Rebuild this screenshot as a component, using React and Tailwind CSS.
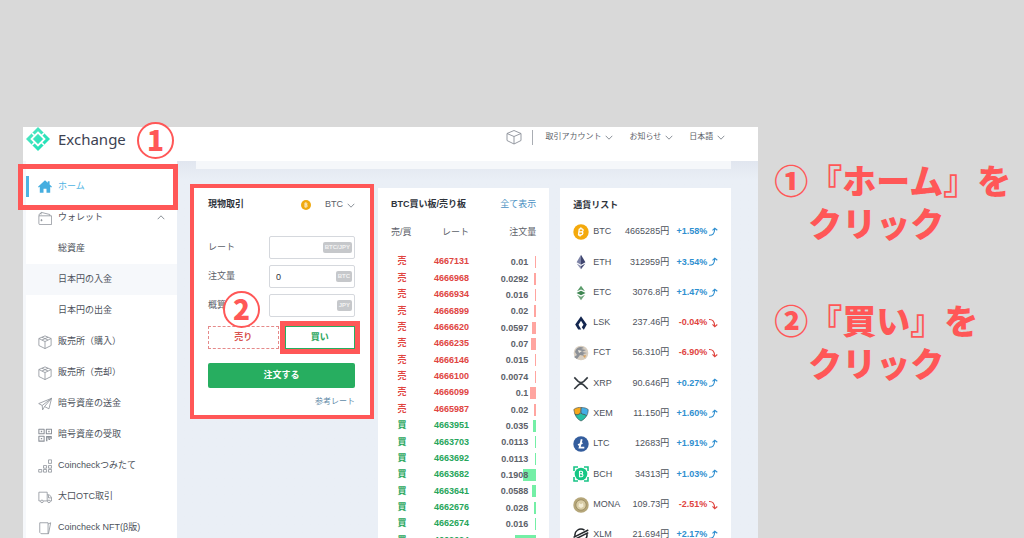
import React from 'react';

const sidebarItems = [
  { label: 'ウォレット', icon: 'wallet', open: true },
  { label: '総資産' },
  { label: '日本円の入金', shaded: true },
  { label: '日本円の出金' },
  { label: '販売所（購入）', icon: 'cube' },
  { label: '販売所（売却）', icon: 'cube' },
  { label: '暗号資産の送金', icon: 'plane' },
  { label: '暗号資産の受取', icon: 'qr' },
  { label: 'Coincheckつみたて', icon: 'stack' },
  { label: '大口OTC取引', icon: 'truck' },
  { label: 'Coincheck NFT(β版)', icon: 'cards' },
];

const orders = [
  ['売', '4667131', '0.01', 1],
  ['売', '4666968', '0.0292', 2],
  ['売', '4666934', '0.016', 1],
  ['売', '4666899', '0.02', 2],
  ['売', '4666620', '0.0597', 4],
  ['売', '4666235', '0.07', 5],
  ['売', '4666146', '0.015', 1],
  ['売', '4666100', '0.0074', 1],
  ['売', '4666099', '0.1', 6],
  ['売', '4665987', '0.02', 2],
  ['買', '4663951', '0.035', 3],
  ['買', '4663703', '0.0113', 1],
  ['買', '4663692', '0.0113', 1],
  ['買', '4663682', '0.1908', 13],
  ['買', '4663641', '0.0588', 4],
  ['買', '4662676', '0.028', 2],
  ['買', '4662674', '0.016', 1],
  ['買', '4662624', '0.3187', 21],
];

const coins = [
  ['BTC', '4665285', '+1.58%'],
  ['ETH', '312959', '+3.54%'],
  ['ETC', '3076.8', '+1.47%'],
  ['LSK', '237.46', '-0.04%'],
  ['FCT', '56.310', '-6.90%'],
  ['XRP', '90.646', '+0.27%'],
  ['XEM', '11.150', '+1.60%'],
  ['LTC', '12683', '+1.91%'],
  ['BCH', '34313', '+1.03%'],
  ['MONA', '109.73', '-2.51%'],
  ['XLM', '21.694', '+2.17%'],
];

function Chevron({ up }) {
  return (
    <svg viewBox="0 0 8 5" className="h-[5px] w-2 shrink-0" fill="none" stroke="#7d838c" strokeWidth="0.9" aria-hidden="true">
      <path d={up ? 'M0.7 4.2 4 0.8l3.3 3.4' : 'M0.7 0.8 4 4.2l3.3-3.4'} />
    </svg>
  );
}

function MenuIcon({ name }) {
  const shapes = {
    wallet: (
      <>
        <path d="M1 5.500h14.500v10H2.200A1.200 1.200 0 0 1 1 14.300z" />
        <path d="M1.200 5.500V3.800L3.500 2.500M3.500 4V1.500l10 2.500v1.500" />
        <circle cx="4" cy="10.500" r=".7" fill="#8b9098" />
      </>
    ),
    cube: (
      <>
        <path d="M8 1 15 4v8l-7 3.500L1 12V4z" />
        <path d="m1 4 7 3.500L15 4M8 7.500v8M4.500 2.500l7 3.300M11.500 2.500l-7 3.300" />
      </>
    ),
    plane: <path d="M15.500 1.500.8 7.500l4 2.200 10.700-8.200-3 12-5-2.600-2.200 3.800-.5-5M7.500 10.900l8-9.400" />,
    qr: (
      <>
        <path d="M1 1.500h6v5H1zM9.500 1.500h6v5h-6zM1 9.500h6v5.500H1z" strokeWidth="1.200" />
        <path d="M3.200 4h1.600M11.700 4h1.600M3.200 12.200h1.600M9.500 10h6M10 9.500v5.500M12.500 9.500v3M15 9.500v3M12 13h2" strokeWidth="1.500" />
      </>
    ),
    stack: (
      <path d="M.8 12h3.500v3H.8zM6.300 12h3.500v3H6.300zM12 12h3.500v3H12zM6.300 7.500h3.500v3H6.300zM12 7.500h3.500v3H12zM12 1h3.500v4H12z" />
    ),
    truck: (
      <>
        <path d="M3 12.500H1V2.500h9.500v10H6M10.500 5.500H13l2.500 3v4H14M10.500 12.500h.5M12 6v3h3.500" />
        <circle cx="4.500" cy="13" r="1.500" />
        <circle cx="12.500" cy="13" r="1.500" />
      </>
    ),
    cards: <path d="M2 2h9.500v12.500H3.500L2 13zM11.500 3.500 14.500 2l-2.500 12.500h-.5" />,
  };
  return (
    <svg viewBox="0 0 16 16" className="size-[14px] shrink-0" fill="none" stroke="#8b9098" strokeWidth="0.9" strokeLinejoin="round" aria-hidden="true">
      {shapes[name]}
    </svg>
  );
}

function CoinIcon({ name }) {
  const art = {
    BTC: (
      <>
        <circle cx="8" cy="8" r="7.700" fill="#f4a90b" />
        <path d="M6.300 4.800 5.500 11.200M6.300 4.900h2.400c2 0 1.900 2.800-.3 2.900H6.200M8.400 7.800c2.300.1 1.700 3.200-.6 3.200H5M8 3.400l-.2 1.300M7.200 11.200 7 12.500" fill="none" stroke="#fff" strokeWidth="1.300" />
      </>
    ),
    ETH: (
      <>
        <path d="M8 .8 3.600 8.300 8 10.800z" fill="#7d83a6" />
        <path d="M8 .8v10l4.400-2.500z" fill="#3f456f" />
        <path d="M3.600 9.500 8 15.200V12z" fill="#8b90b0" />
        <path d="M12.400 9.500 8 15.200V12z" fill="#4b5179" />
      </>
    ),
    ETC: (
      <>
        <path d="M8 .8 4 6.200 8 4.600l4 1.600z" fill="#5b9c6b" />
        <path d="M3.500 8 8 5.800 12.500 8 8 10.300z" fill="#3f8652" />
        <path d="M4 9.700 8 15.200l4-5.500-4 2z" fill="#6fa67c" />
      </>
    ),
    LSK: <path d="M8 1.200 2.200 9.600l3 4.900h3L5.500 9.800 8 5.800l2.500 4-1.700 2.400 1.600 2.300h.6l2.800-4.900z" fill="#13264f" />,
    FCT: (
      <>
        <circle cx="8" cy="8" r="7.300" fill="#d8cec0" />
        <path d="M2 7c1-5 6-6 9-4l-3 1 5 1-4 2 5 1-4 1 2 2-5-1-3 4-3-2 3-2z" fill="#8d9197" />
        <path d="M5 5l4 1-3 2z" fill="#eee9df" />
        <path d="M10 11l3-1-1 3z" fill="#dba25b" />
      </>
    ),
    XRP: <path d="M1.300 2.400 5.200 6.300q2.800 2.500 5.600 0l3.900-3.900M1.300 14l3.900-3.900q2.800-2.500 5.600 0l3.900 3.900" fill="none" stroke="#343a40" strokeWidth="1.600" />,
    XEM: (
      <>
        <path d="M.8 3.500C3 1.500 6 1.300 8.500 1.500 6.500 3.500 9 7 5.500 8.500c-1.500.8-3 .2-3.700-.5z" fill="#f6a81c" stroke="#37484a" strokeWidth=".6" />
        <path d="M8.500 1.500c3 0 5 .7 6.700 2 0 3-.7 5-1.700 6.500-1-2.500-4-.5-5.500-3z" fill="#45aee5" stroke="#37484a" strokeWidth=".6" />
        <path d="M1.900 8c1 1 2.500 1 4 .2C7.500 7.500 8 7 8 7c1.500 2.500 4.500.5 5.500 3-1.500 2.500-3.500 4-5.500 5-3-1.300-5-4-6.100-7z" fill="#28bfa5" stroke="#37484a" strokeWidth=".6" />
      </>
    ),
    LTC: (
      <>
        <circle cx="8" cy="8" r="7.700" fill="#345d9d" />
        <path d="M8.700 3.300 6.600 11.700h4.700M5 9l4.500-2" fill="none" stroke="#fff" strokeWidth="1.800" />
      </>
    ),
    BCH: (
      <>
        <path d="M1 5V1h4M11 1h4v4M15 11v4h-4M5 15H1v-4" fill="none" stroke="#18c486" strokeWidth="1.600" />
        <circle cx="8" cy="8" r="6.300" fill="#16c784" />
        <path d="M6.500 5v6M6.500 5.200h1.800c1.800 0 1.800 2.600 0 2.600H6.500M8.300 7.900c2.300 0 2.200 2.900 0 2.900H6" fill="none" stroke="#fff" strokeWidth="1.100" />
      </>
    ),
    MONA: (
      <>
        <circle cx="8" cy="8" r="7.700" fill="#b5a679" />
        <circle cx="8" cy="8" r="5.200" fill="#d8cca6" stroke="#8f8158" strokeWidth=".7" />
        <path d="M5.500 9.500 6 6l1.500 1h1L10 6l.5 3.500L8 11z" fill="#f3edd6" />
      </>
    ),
    XLM: (
      <>
        <path d="M2.300 10A6 6 0 0 1 11.500 3.200M13.800 6.500A6 6 0 0 1 4.500 12.800" fill="none" stroke="#23272b" strokeWidth="1.500" />
        <path d="M.5 10.300 15.300 3M.5 13 15.300 5.600" stroke="#23272b" strokeWidth="1.500" />
      </>
    ),
  };
  return (
    <svg viewBox="0 0 16 16" className="size-4" aria-hidden="true">
      {art[name]}
    </svg>
  );
}

function Trend({ up }) {
  return (
    <svg viewBox="0 0 10 10" className="size-2.5 shrink-0" fill="none" stroke="currentColor" strokeWidth="1.1" aria-hidden="true">
      {up ? (
        <path d="M1 8.300C4.500 8.500 6.500 7 6.700 1.800M4.500 3.400 6.800 1.200l2.500 2" />
      ) : (
        <path d="M1 1.500C4.500 1.300 6.500 3 6.700 8.200M4.500 6.300 6.800 8.700l2.500-2.200" />
      )}
    </svg>
  );
}

function Header() {
  return (
    <header className="relative z-10 flex h-[34px] shrink-0 items-start justify-between bg-white pl-[3px] pr-[33px]">
      <div className="flex h-6 items-center gap-2">
        <svg viewBox="0 0 24 24" className="size-6" aria-hidden="true">
          <defs>
            <linearGradient id="brand" x1="0" y1="0" x2="1" y2="1">
              <stop offset="0" stopColor="#5be7c4" />
              <stop offset="1" stopColor="#12e0b4" />
            </linearGradient>
          </defs>
          <path d="M12 0 24 12 12 24 0 12z" fill="url(#brand)" />
          <path d="M12 5.500 18.500 12 12 18.500 5.500 12z" fill="none" stroke="#fff" strokeWidth="1.800" />
          <path d="M6 6 9 9M18 6l-3 3M6 18l3-3M18 18l-3-3" stroke="#fff" strokeWidth="1.600" />
        </svg>
        <span className="font-['Noto_Sans'] text-[15px] leading-6 text-[#3d4252]">Exchange</span>
      </div>
      <nav className="flex h-5 items-center text-[8px] text-[#5c6169]">
        <svg viewBox="0 0 16 16" className="size-4" fill="none" stroke="#8b9098" strokeWidth="0.9" strokeLinejoin="round" aria-hidden="true">
          <path d="M8 1.500 15 4.500v7l-7 3.500-7-3.500v-7zM1 4.500 8 7.500l7-3M8 7.500V15" />
        </svg>
        <span className="ml-2.5 mr-3 h-[15px] w-px bg-[#a9adb3]" />
        <button type="button" className="mr-4 flex items-center gap-1">取引アカウント <Chevron /></button>
        <button type="button" className="mr-4 flex items-center gap-1">お知らせ <Chevron /></button>
        <button type="button" className="flex items-center gap-1">日本語 <Chevron /></button>
      </nav>
    </header>
  );
}

function Sidebar() {
  return (
    <nav className="w-[154px] shrink-0 border-l-[3px] border-[#f6f8fb] bg-white pt-[10px] text-[9px] text-[#4d525b]">
      <a href="#home" className="relative flex h-[31px] items-center text-[#4db3e3]">
        <span className="h-[21px] w-[3px] bg-[#4db3e3]" />
        <svg viewBox="0 0 14 13" className="ml-[9px] mr-1.5 h-[13px] w-[14px]" fill="#45aee0" aria-hidden="true">
          <path d="M7 .3 9.800 2.800V1.200h1.800v3.200L14 6.700l-.8.9-1-.8V12.800H8.500V8.800h-3v4H1.800V6.800l-1 .8L0 6.700z" />
        </svg>
        ホーム
        <span className="pointer-events-none absolute -bottom-2 -left-2 -right-px -top-[7px] border-[5px] border-[#ff5757]" />
      </a>
      {sidebarItems.map((item) => (
        <a
          key={item.label}
          href="#menu"
          className={`flex h-[31px] items-center pl-3 pr-3 ${item.shaded ? 'bg-[#f6f8fb]' : ''}`}
        >
          <span className="mr-1.5 flex w-[14px]">{item.icon && <MenuIcon name={item.icon} />}</span>
          <span className="grow whitespace-nowrap">{item.label}</span>
          {item.open && <Chevron up />}
        </a>
      ))}
    </nav>
  );
}

function Field({ id, label, unit, value }) {
  return (
    <div className="flex items-center justify-between">
      <label htmlFor={id} className="text-[9px] text-[#5c6169]">{label}</label>
      <div className="relative w-[86px]">
        <input
          id={id}
          defaultValue={value}
          className="block h-[23px] w-full rounded-[2px] border border-[#d5d8dd] bg-white pl-1.5 text-[9px] text-[#2f343c] outline-none"
        />
        <span className="absolute right-[3px] top-[6px] rounded-[2px] bg-[#c6c8cb] px-[2px] text-[6px] font-bold leading-[11px] text-[#f2f2f2]">
          {unit}
        </span>
      </div>
    </div>
  );
}

function OrderForm() {
  return (
    <form className="-ml-1.5 -mr-[7px] -mt-1 self-start border-4 border-[#ff5757] bg-white pb-[7px] pl-[14px] pr-[15px] pt-[11px]">
      <div className="flex h-3 items-center justify-between">
        <h2 className="text-[9px] font-bold text-[#2f343c]">現物取引</h2>
        <button type="button" className="flex items-center text-[9px] text-[#5c6169]">
          <svg viewBox="0 0 10 10" className="mr-[14px] size-2.5" aria-hidden="true">
            <circle cx="5" cy="5" r="5" fill="#f0aa10" />
            <path d="M4 2.800v4.500M4 3h1.200c1.200 0 1.200 1.800 0 1.900H4M5.200 5c1.500 0 1.500 2 0 2H4" fill="none" stroke="#fff" strokeWidth=".8" />
          </svg>
          <span className="mr-1">BTC</span>
          <Chevron />
        </button>
      </div>
      <div className="relative mt-[25px] flex flex-col gap-[6px]">
        <Field id="rate" label="レート" unit="BTC/JPY" />
        <Field id="amount" label="注文量" unit="BTC" value="0" />
        <Field id="estimate" label="概算" unit="JPY" />
        <Badge className="absolute left-[15px] top-[55px]">2</Badge>
      </div>
      <div className="mt-[9px] flex gap-[6px] text-[9px] font-bold">
        <button type="button" className="h-[23px] flex-1 border border-dashed border-[#e58a8a] text-[#d9534f]">売り</button>
        <button type="button" className="relative h-[23px] flex-1 border border-[#27ae60] text-[#27a55a]">
          買い
          <span className="pointer-events-none absolute -inset-[6px] border-[5px] border-[#ff5757]" />
        </button>
      </div>
      <button type="submit" className="mt-[14px] block h-[25px] w-full rounded-[2px] bg-[#27ae60] text-[9px] font-bold text-white">
        注文する
      </button>
      <div className="mt-2 flex justify-end">
        <a href="#rate-reference" className="text-[8px] leading-3 text-[#5f8ba8]">参考レート</a>
      </div>
    </form>
  );
}

function OrderBook() {
  return (
    <section className="bg-white px-[13px] pt-[11px]">
      <div className="flex h-3 items-center justify-between text-[9px]">
        <h2 className="whitespace-nowrap font-bold text-[#2f343c]">BTC買い板/売り板</h2>
        <a href="#all" className="text-[#4a90c2]">全て表示</a>
      </div>
      <table className="mt-[11px] h-[327px] w-full table-fixed text-[9px]">
        <thead>
          <tr className="h-8 text-[#5c6169]">
            <th className="w-[22px] whitespace-nowrap p-0 pb-[10px] text-left font-normal">売/買</th>
            <th className="w-14 p-0 pb-[10px] text-right font-normal">レート</th>
            <th className="p-0 pb-[10px] text-right font-normal">注文量</th>
          </tr>
        </thead>
        <tbody className="font-bold">
          {orders.map(([side, rate, amount, depth]) => (
            <tr key={rate} className={side === '売' ? 'text-[#e0453f]' : 'text-[#26a65b]'}>
              <td className="p-0 text-center">{side}</td>
              <td className="p-0 text-right">{rate}</td>
              <td className="p-0">
                <div className="relative flex justify-end pr-2">
                  <span
                    className={`absolute inset-y-0 right-0 ${side === '売' ? 'bg-[#ffa5a0]' : 'bg-[#74efa6]'}`}
                    style={{ width: depth }}
                  />
                  <span className="relative leading-[12px] text-[#5c6169]">{amount}</span>
                </div>
              </td>
            </tr>
          ))}
        </tbody>
      </table>
    </section>
  );
}

function CoinList() {
  return (
    <section className="bg-white px-[13px] pt-[11px]">
      <h2 className="h-3 text-[9px] font-bold leading-3 text-[#2f343c]">通貨リスト</h2>
      <table className="mt-[6px] h-[333px] w-full table-fixed whitespace-nowrap text-[9px] text-[#4d525b]">
        <tbody>
          {coins.map(([name, price, change]) => {
            const up = change.startsWith('+');
            return (
              <tr key={name}>
                <td className="w-5 p-0"><CoinIcon name={name} /></td>
                <td className="w-7 p-0">{name}</td>
                <td className="w-12 p-0 text-right">{price}円</td>
                <td className={`p-0 font-bold ${up ? 'text-[#2f8fd0]' : 'text-[#e0453f]'}`}>
                  <div className="flex items-center justify-end gap-px">
                    {change}
                    <Trend up={up} />
                  </div>
                </td>
              </tr>
            );
          })}
        </tbody>
      </table>
    </section>
  );
}

function Badge({ className, children }) {
  return (
    <span
      className={`flex size-[37px] items-center justify-center rounded-full border-2 border-[#ff5757] bg-white pb-1 font-['Noto_Sans_CJK_JP',sans-serif] text-[28px] font-black leading-none text-[#ff5757] ${className}`}
    >
      {children}
    </span>
  );
}

function Step({ mark, target }) {
  return (
    <li>
      {`${mark}『${target}』を`}
      <br />
      {'　クリック'}
    </li>
  );
}

export default function App() {
  return (
    <div className="flex h-screen items-stretch overflow-hidden bg-[#d9d9d9] pl-[23px] font-['Liberation_Sans','Noto_Sans_CJK_JP',sans-serif]">
      <main className="relative mt-[127px] flex min-w-0 grow flex-col bg-[#e9eef5]">
        <Header />
        <Badge className="absolute left-[114px] top-[-5px] z-20">1</Badge>
        <div className="flex grow">
          <Sidebar />
          <div className="grow bg-linear-to-b from-[#e1e6ef] to-[#eaeff6] to-5% pl-[19px] pr-[27px]">
            <div className="h-2 bg-[#f5f7fa]" />
            <div className="mt-[19px] grid grid-cols-3 gap-[11px]">
              <OrderForm />
              <OrderBook />
              <CoinList />
            </div>
          </div>
        </div>
      </main>
      <ol className="flex w-[266px] shrink-0 flex-col gap-[54px] pl-4 pt-[158px] font-['Noto_Sans_CJK_JP',sans-serif] text-[34px] font-black leading-[43px] text-[#ff5757]">
        <Step mark="①" target="ホーム" />
        <Step mark="②" target="買い" />
      </ol>
    </div>
  );
}
